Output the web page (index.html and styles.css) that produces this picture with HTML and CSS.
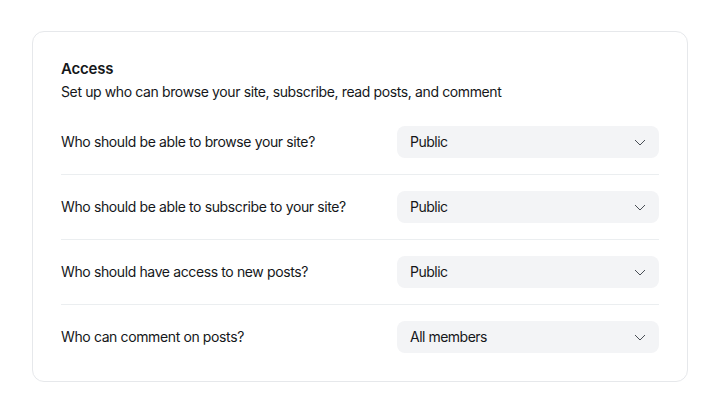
FILE: index.html
```html
<!DOCTYPE html>
<html lang="en">
<head>
    <meta charset="UTF-8">
    <title>Access settings</title>
    <link rel="stylesheet" href="styles.css">
</head>
<body>
    <div class="card">
        <div class="card-header">
            <h2>Access</h2>
            <p>Set up who can browse your site, subscribe, read posts, and comment</p>
        </div>

        <div class="row">
            <span class="row-label">Who should be able to browse your site?</span>
            <div class="select">
                <span class="select-value">Public</span>
                <svg class="chevron" width="12" height="7" viewBox="0 0 12 7"><path d="M1 1l5 5 5-5" fill="none" stroke="#4a4f56" stroke-width="1"/></svg>
            </div>
        </div>

        <div class="row">
            <span class="row-label">Who should be able to subscribe to your site?</span>
            <div class="select">
                <span class="select-value">Public</span>
                <svg class="chevron" width="12" height="7" viewBox="0 0 12 7"><path d="M1 1l5 5 5-5" fill="none" stroke="#4a4f56" stroke-width="1"/></svg>
            </div>
        </div>

        <div class="row">
            <span class="row-label">Who should have access to new posts?</span>
            <div class="select">
                <span class="select-value">Public</span>
                <svg class="chevron" width="12" height="7" viewBox="0 0 12 7"><path d="M1 1l5 5 5-5" fill="none" stroke="#4a4f56" stroke-width="1"/></svg>
            </div>
        </div>

        <div class="row">
            <span class="row-label">Who can comment on posts?</span>
            <div class="select">
                <span class="select-value">All members</span>
                <svg class="chevron" width="12" height="7" viewBox="0 0 12 7"><path d="M1 1l5 5 5-5" fill="none" stroke="#4a4f56" stroke-width="1"/></svg>
            </div>
        </div>
    </div>
</body>
</html>
```

FILE: styles.css
```css
body {
    font-family: 'Inter', sans-serif;
    background-color: #ffffff;
    margin: 0;
    padding: 31px 32px 0 32px;
    color: #15171a;
}

.card {
    border: 1px solid #e6e8eb;
    border-radius: 12px;
    padding: 26px 28px 12px 28px;
    box-sizing: border-box;
    width: 656px;
}

.card-header h2 {
    margin: 0;
    font-size: 15px;
    font-weight: 600;
    line-height: 22px;
    letter-spacing: -0.2px;
}

.card-header p {
    margin: 2px 0 0 0;
    font-size: 14px;
    line-height: 20px;
    letter-spacing: -0.38px;
}

.card-header {
    margin-bottom: 8px;
}

.row {
    display: flex;
    justify-content: space-between;
    align-items: center;
    padding: 16px 0;
    border-bottom: 1px solid #ebeef0;
    font-size: 14px;
    letter-spacing: -0.38px;
}

.row-label {
    margin-top: -1px;
}

.row:last-child {
    border-bottom: none;
}

.select {
    display: flex;
    justify-content: space-between;
    align-items: center;
    width: 262px;
    height: 32px;
    box-sizing: border-box;
    padding: 0 13px;
    background-color: #f3f4f6;
    border-radius: 8px;
}

.select-value {
    margin-top: -1px;
    letter-spacing: -0.5px;
}
```
